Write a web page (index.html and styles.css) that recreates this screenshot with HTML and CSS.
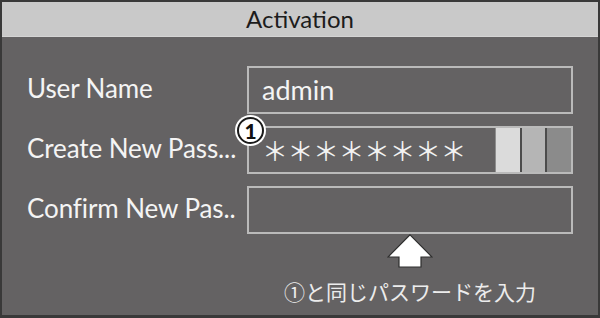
FILE: index.html
```html
<!DOCTYPE html>
<html lang="ja">

<head>
    <meta charset="UTF-8">
    <meta name="viewport" content="width=device-width, initial-scale=1.0">
    <title>Activation</title>
    <link rel="stylesheet" href="styles.css">
</head>

<body>
    <div class="panel">
        <div class="panel-title">Activation</div>

        <div class="form">
            <label class="field-label" for="userName">User Name</label>
            <div class="field" id="userName">admin</div>

            <label class="field-label" for="newPass">Create New Pass...</label>
            <div class="field field-password" id="newPass">
                <span class="badge">1</span>
                <span class="mask">＊＊＊＊＊＊＊＊</span>
                <div class="strength">
                    <span class="strength-seg weak"></span>
                    <span class="strength-seg medium"></span>
                    <span class="strength-seg strong"></span>
                </div>
            </div>

            <label class="field-label" for="confirmPass">Confirm New Pas..</label>
            <div class="field" id="confirmPass"></div>

            <div class="hint">
                <svg class="hint-arrow" width="46" height="34" viewBox="0 0 46 34">
                    <polygon points="23,0.8 45,23 34,23 34,33 12,33 12,23 1,23" fill="#ffffff" stroke="#2e2e2e" stroke-width="1.2" stroke-linejoin="miter" />
                </svg>
                <p class="hint-text">①と同じパスワードを入力</p>
            </div>
        </div>
    </div>
</body>

</html>
```

FILE: styles.css
```css
body {
    margin: 0;
    padding: 0;
    background-color: #3a3a3a;
    font-family: Lato, 'Open Sans', 'Noto Sans CJK JP', sans-serif;
}

.panel {
    box-sizing: border-box;
    width: 600px;
    height: 318px;
    border: 2px solid #393939;
    border-bottom-width: 3px;
    background-color: #646263;
    display: flex;
    flex-direction: column;
}

.panel-title {
    height: 34px;
    line-height: 34px;
    background-color: #c9c9c9;
    border-bottom: 1px solid #d4d4d4;
    color: #1c1c1c;
    text-align: center;
    font-size: 24px;
}

.form {
    display: grid;
    grid-template-columns: 220px 326px;
    grid-template-rows: 48px 48px 48px auto;
    row-gap: 12px;
    padding: 29px 25px 0 25px;
}

.field-label {
    display: flex;
    align-items: center;
    padding-bottom: 4px;
    color: #f4f4f4;
    font-size: 26px;
    letter-spacing: -0.1px;
    white-space: nowrap;
}

.field {
    position: relative;
    box-sizing: border-box;
    display: flex;
    align-items: center;
    border: 2px solid #bababa;
    padding-left: 13px;
    padding-bottom: 2px;
    color: #f4f4f4;
    font-size: 27px;
}

.field-password {
    padding-left: 13px;
    padding-right: 0;
    padding-bottom: 0;
}

.mask {
    flex: 1;
    font-family: 'Noto Sans CJK JP', sans-serif;
    font-size: 26px;
    letter-spacing: -0.5px;
    color: #f2f2f2;
    line-height: 1;
}

.strength {
    display: flex;
    align-self: stretch;
    gap: 2px;
    width: 75px;
    background-color: #4c4c4c;
    border-left: 1px solid #8e8e8e;
}

.strength-seg {
    flex: 1;
}

.weak {
    background-color: #dbdbdb;
}

.medium {
    background-color: #b5b5b5;
}

.strong {
    background-color: #8b8b8b;
}

.badge {
    position: absolute;
    left: -12px;
    top: -11px;
    box-sizing: border-box;
    width: 27px;
    height: 27px;
    border: 2px solid #1a1a1a;
    border-radius: 50%;
    background-color: #ffffff;
    box-shadow: 0 0 0 2px #ffffff;
    color: #111;
    font-size: 21px;
    font-weight: 900;
    line-height: 23px;
    text-align: center;
}

.hint {
    grid-column: 2;
    display: flex;
    flex-direction: column;
    align-items: center;
    margin-top: -12px;
}

.hint-arrow {
    display: block;
    flex-shrink: 0;
}

.hint-text {
    margin: 10px 0 0;
    color: #ececec;
    font-family: 'Noto Sans CJK JP', sans-serif;
    font-size: 21px;
    line-height: 26px;
    white-space: nowrap;
}
```
